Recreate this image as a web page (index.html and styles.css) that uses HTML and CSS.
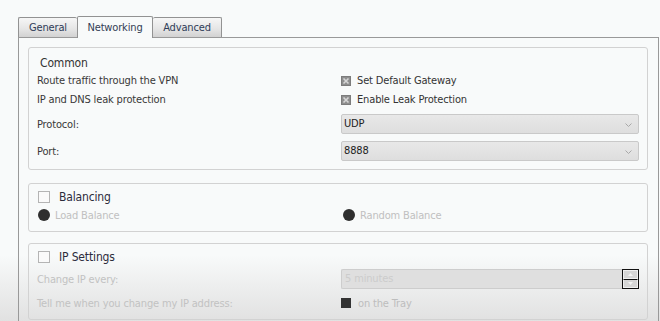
FILE: index.html
```html
<!DOCTYPE html>
<html lang="en">
<head>
    <meta charset="UTF-8">
    <title>Networking</title>
    <link rel="stylesheet" href="styles.css">
</head>
<body>
    <div class="window">
        <div class="tabs">
            <div class="tab">General</div>
            <div class="tab active">Networking</div>
            <div class="tab">Advanced</div>
        </div>
        <div class="pane">
            <div class="group common">
                <div class="group-title">Common</div>
                <div class="row row-check">
                    <span class="label">Route traffic through the VPN</span>
                    <label class="check">
                        <svg class="box" width="10" height="10" viewBox="0 0 10 10"><rect x="0.5" y="0.5" width="9" height="9" fill="#8e8e8e" stroke="#7c7c7c"/><path d="M2.5 2.5 L7.5 7.5 M7.5 2.5 L2.5 7.5" stroke="#d6d6d6" stroke-width="1.6"/></svg>
                        Set Default Gateway
                    </label>
                </div>
                <div class="row row-check">
                    <span class="label">IP and DNS leak protection</span>
                    <label class="check">
                        <svg class="box" width="10" height="10" viewBox="0 0 10 10"><rect x="0.5" y="0.5" width="9" height="9" fill="#8e8e8e" stroke="#7c7c7c"/><path d="M2.5 2.5 L7.5 7.5 M7.5 2.5 L2.5 7.5" stroke="#d6d6d6" stroke-width="1.6"/></svg>
                        Enable Leak Protection
                    </label>
                </div>
                <div class="row row-select first">
                    <span class="label">Protocol:</span>
                    <div class="select">UDP
                        <svg class="chevron" width="7" height="4" viewBox="0 0 7 4"><path d="M0.5 0.5 L3.5 3.5 L6.5 0.5" fill="none" stroke="#a8a8a8"/></svg>
                    </div>
                </div>
                <div class="row row-select">
                    <span class="label">Port:</span>
                    <div class="select">8888
                        <svg class="chevron" width="7" height="4" viewBox="0 0 7 4"><path d="M0.5 0.5 L3.5 3.5 L6.5 0.5" fill="none" stroke="#a8a8a8"/></svg>
                    </div>
                </div>
            </div>

            <div class="group balancing">
                <div class="group-head">
                    <span class="empty-box"></span>
                    <span class="head-label">Balancing</span>
                </div>
                <div class="row row-radio">
                    <label class="radio"><span class="dot"></span>Load Balance</label>
                    <label class="radio second"><span class="dot"></span>Random Balance</label>
                </div>
            </div>

            <div class="group ip">
                <div class="group-head">
                    <span class="empty-box"></span>
                    <span class="head-label">IP Settings</span>
                </div>
                <div class="row row-spin">
                    <span class="label disabled">Change IP every:</span>
                    <div class="spin">
                        <div class="spin-value">5 minutes</div>
                        <div class="spin-buttons">
                            <span class="spin-btn"><svg width="5" height="3" viewBox="0 0 5 3"><path d="M0 3 L2.5 0 L5 3 Z" fill="#f4f4f4"/></svg></span>
                            <span class="spin-btn"><svg width="5" height="3" viewBox="0 0 5 3"><path d="M0 0 L2.5 3 L5 0 Z" fill="#f4f4f4"/></svg></span>
                        </div>
                    </div>
                </div>
                <div class="row row-tray">
                    <span class="label disabled">Tell me when you change my IP address:</span>
                    <label class="check disabled"><span class="dark-box"></span>on the Tray</label>
                </div>
            </div>
        </div>
    </div>
</body>
</html>
```

FILE: styles.css
```css
body {
    margin: 0;
    height: 321px;
    overflow: hidden;
    background: linear-gradient(to bottom, #f8fafa 0, #f8fafa 255px, #e1e1e1 321px);
    font-family: "DejaVu Sans Condensed", "Liberation Sans", Arial, sans-serif;
    font-size: 11px;
    letter-spacing: -0.15px;
    color: #333;
}
.window {
    padding: 16px 1px 0 18px;
}
.tabs {
    display: flex;
    align-items: flex-end;
    height: 21px;
}
.tab {
    height: 19px;
    line-height: 19px;
    border: 1px solid #929292;
    border-bottom: none;
    border-radius: 2px 2px 0 0;
    background: linear-gradient(to bottom, #f6f6f6 0%, #e6e6e6 55%, #d2d2d2 100%);
    color: #2f3c58;
    text-align: center;
}
.tab:first-child {
    width: 58px;
    border-right: none;
}
.tab.active {
    position: relative;
    height: 21px;
    line-height: 21px;
    width: 74px;
    background: #f8fafa;
    margin-bottom: -1px;
    z-index: 1;
    color: #333d55;
}
.tab:last-child {
    width: 68px;
    border-left: none;
}
.pane {
    border: 1px solid #999;
    border-bottom: none;
    padding: 9px 10px 20px 9px;
}
.group {
    border: 1px solid #d2d2d2;
    border-radius: 3px;
    padding: 7px 8px 8px 8px;
}
.group-title {
    height: 16px;
    line-height: 16px;
    padding-left: 3px;
    font-size: 12px;
    color: #333;
}
.row {
    display: grid;
    grid-template-columns: 304px 1fr;
    align-items: center;
}
.row-check {
    height: 19px;
}
.row-select {
    height: 20px;
    margin-top: 7px;
}
.row-select.first {
    margin-top: 5px;
}
.label {
    color: #383838;
}
.label.disabled {
    color: #c2c2c2;
}
.check {
    display: flex;
    align-items: center;
    gap: 6px;
    color: #333;
}
.check.disabled {
    color: #bdbdbd;
    gap: 7px;
}
.box {
    display: block;
}
.select {
    position: relative;
    height: 18px;
    line-height: 18px;
    padding-left: 2px;
    border: 1px solid #c9c9c9;
    border-radius: 2px;
    background: linear-gradient(to bottom, #e8e8e8, #dedede);
    color: #222;
}
.chevron {
    position: absolute;
    right: 6px;
    top: 8px;
}

.balancing {
    margin-top: 13px;
    padding-top: 5px;
    padding-bottom: 8px;
}
.group-head {
    display: flex;
    align-items: center;
    height: 16px;
    padding-left: 1px;
}
.empty-box {
    width: 10px;
    height: 10px;
    border: 1px solid #b4b4b4;
    background: #fafafa;
}
.head-label {
    margin-left: 9px;
    font-size: 12px;
    color: #2c2c3c;
}
.row-radio {
    height: 16px;
    margin-top: 2px;
}
.radio {
    display: flex;
    align-items: center;
    gap: 5px;
    padding-left: 1px;
    color: #c0c0c0;
}
.radio.second {
    padding-left: 2px;
}
.dot {
    width: 12px;
    height: 12px;
    border-radius: 50%;
    background: #2f2f2f;
}

.ip {
    margin-top: 11px;
    padding-top: 5px;
    padding-bottom: 6px;
}
.row-spin {
    height: 20px;
    margin-top: 4px;
}
.row-tray {
    height: 20px;
    margin-top: 4px;
}
.spin {
    display: flex;
    height: 20px;
}
.spin-value {
    flex: 1;
    height: 18px;
    line-height: 18px;
    padding-left: 3px;
    border: 1px solid #cdcdcd;
    border-right: none;
    border-radius: 2px 0 0 2px;
    background: #dfdfdf;
    color: #cccccc;
}
.spin-buttons {
    display: flex;
    flex-direction: column;
    width: 15px;
    border: 1px solid #111;
}
.spin-btn {
    flex: 1;
    display: flex;
    align-items: center;
    justify-content: center;
    background: #d6d6d6;
    border: 1px solid #f0f0f0;
}
.spin-btn + .spin-btn {
    border-top: 1px solid #111;
}
.dark-box {
    width: 10px;
    height: 10px;
    background: #333;
}
```
